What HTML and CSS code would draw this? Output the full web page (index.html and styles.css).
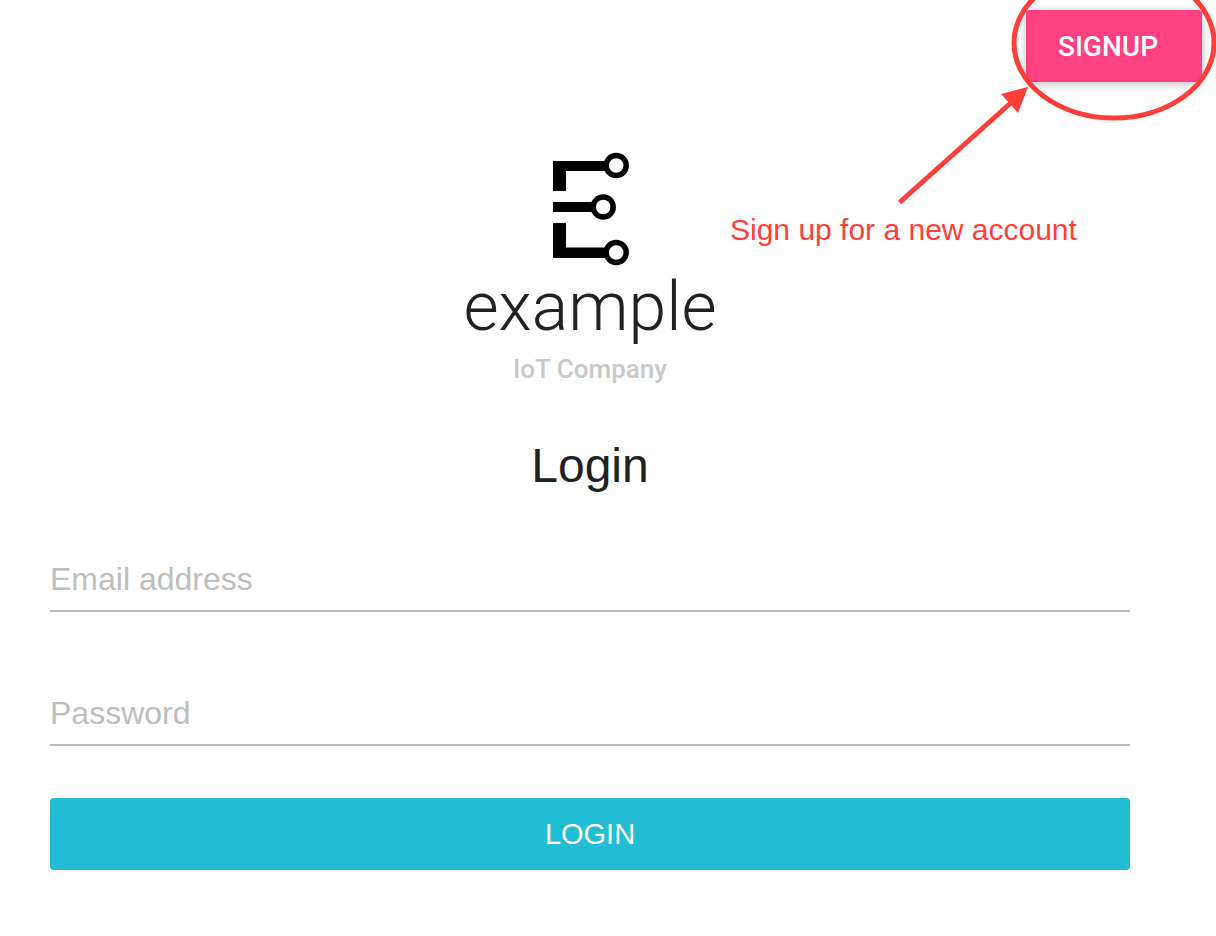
FILE: index.html
```
<!DOCTYPE html>
<html lang="en">
<head>
<meta charset="utf-8">
<meta name="viewport" content="width=device-width, initial-scale=1">
<title>Login - example</title>
<link rel="stylesheet" href="styles.css">
</head>
<body>
<header class="topbar">
  <button class="signup" type="button">SIGNUP</button>
</header>
<main class="content">
  <div class="brand">
    <svg class="logo" viewBox="0 0 78 114" aria-hidden="true">
      <path class="logo-bars" d="M2 9H55V19H15V39H2ZM2 50H42V60H2ZM2 71H15V95.500H55V106H2Z"/>
      <circle class="logo-ring" cx="65.200" cy="13.500" r="10"/>
      <circle class="logo-ring" cx="52.200" cy="55" r="10"/>
      <circle class="logo-ring" cx="65.200" cy="100.500" r="10"/>
    </svg>
    <div class="name">example</div>
    <div class="tagline">IoT Company</div>
  </div>
  <form class="login">
    <h1 class="title">Login</h1>
    <div class="fields">
      <input class="field" type="email" placeholder="Email address" aria-label="Email address">
      <input class="field" type="password" placeholder="Password" aria-label="Password">
    </div>
    <button class="submit" type="submit">LOGIN</button>
  </form>
</main>
<aside class="callout">
  <svg class="callout-art" viewBox="0 0 496 210" aria-hidden="true">
    <ellipse class="mark" cx="394" cy="43" rx="100" ry="75"/>
    <path class="mark" d="M179.500 202.500L294 100"/>
    <path class="mark-head" d="M308 87L281 94L298 113Z"/>
  </svg>
  <p class="callout-text">Sign up for a new account</p>
</aside>
</body>
</html>
```
FILE: styles.css
```
* {
  box-sizing: border-box;
}

body {
  position: relative;
  margin: 0;
  background: #fff;
  color: #212121;
  font-family: Roboto, "Liberation Sans", sans-serif;
}

.topbar {
  display: flex;
  justify-content: flex-end;
  padding: 10px 14px 0;
}

.signup {
  height: 72px;
  padding: 0 44px 0 32px;
  border: 0;
  border-radius: 4px;
  background: #ff4081;
  box-shadow: 0 2px 10px rgba(0, 0, 0, 0.26);
  color: #fff;
  font: 500 28px Roboto, sans-serif;
}

.content {
  padding: 70px 86px 66px 50px;
}

.brand {
  display: flex;
  flex-direction: column;
  align-items: center;
}

.logo {
  width: 78px;
  height: 114px;
}

.logo-bars {
  fill: #000;
}

.logo-ring {
  fill: #fff;
  stroke: #000;
  stroke-width: 5.500px;
}

.name {
  padding-top: 1px;
  font-size: 68px;
  font-weight: 300;
  line-height: 80px;
}

.tagline {
  padding-top: 6px;
  color: #c8c8c8;
  font-size: 26px;
  font-weight: 500;
  line-height: 32px;
}

.login {
  display: flex;
  flex-direction: column;
}

.title {
  margin: 53px 0 56px;
  font: 400 48px/56px "Liberation Sans", sans-serif;
  text-align: center;
}

.fields {
  display: flex;
  flex-direction: column;
  gap: 72px;
  margin-bottom: 52px;
}

.field {
  width: 100%;
  height: 62px;
  padding: 0 0 2px;
  border: 0;
  border-bottom: 2px solid #bdbdbd;
  background: transparent;
  color: #212121;
  font: 32px "Liberation Sans", sans-serif;
}

.field::placeholder {
  color: #bdbdbd;
  opacity: 1;
}

.submit {
  height: 72px;
  border: 0;
  border-radius: 4px;
  background: #22bcd5;
  color: #fff;
  font: 400 29px "Liberation Sans", sans-serif;
}

.callout {
  position: absolute;
  top: 0;
  right: 0;
  width: 496px;
  overflow: hidden;
  color: #ff3e3a;
  pointer-events: none;
}

.callout-art {
  display: block;
  width: 100%;
}

.callout-text {
  margin: 0;
  padding-left: 10px;
  font: 30px/40px "Liberation Sans", sans-serif;
}

.mark {
  fill: none;
  stroke: #ff3e3a;
  stroke-width: 5px;
}

.mark-head {
  fill: #ff3e3a;
}
```
